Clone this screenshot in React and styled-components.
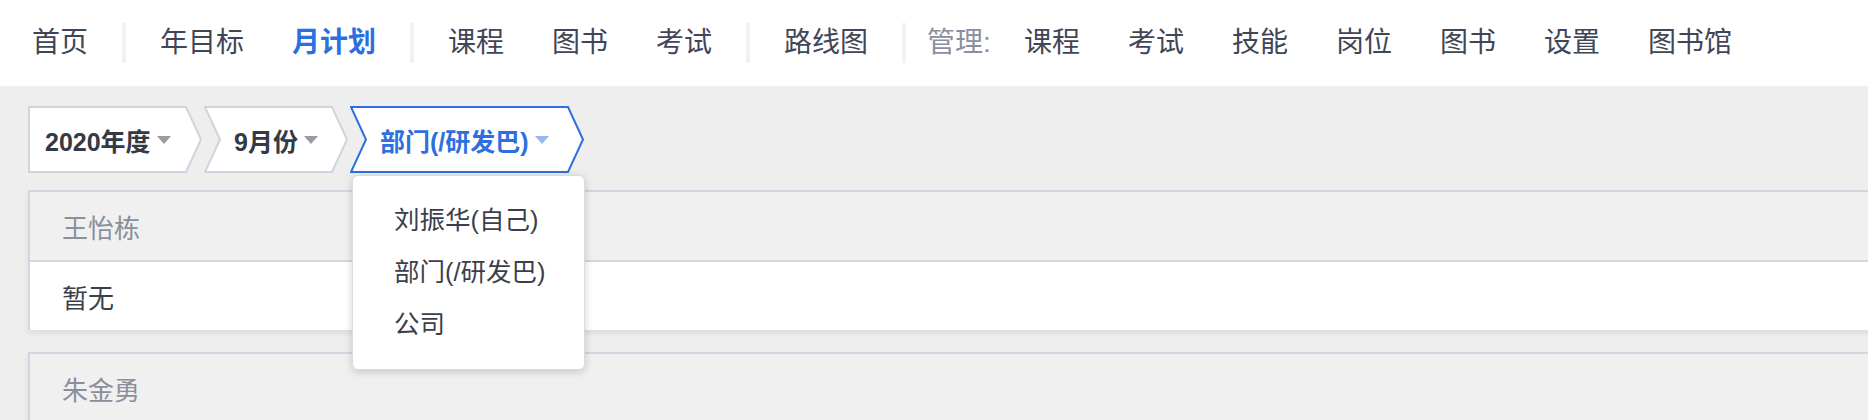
import React from 'react';
import styled, { createGlobalStyle } from 'styled-components';

const GlobalStyle = createGlobalStyle`
  html, body {
    margin: 0;
    padding: 0;
    background: #eeeeee;
    overflow-x: hidden;
    font-family: "Liberation Sans", "Noto Sans CJK SC", sans-serif;
  }
`;

const NavBar = styled.nav`
  height: 86px;
  background: #ffffff;
  display: flex;
  align-items: center;
  padding-left: 8px;
`;

const NavItem = styled.a`
  padding: 0 24px;
  font-size: 28px;
  line-height: 40px;
  color: ${(p) => (p.$active ? '#2d6fe0' : '#3f4657')};
  font-weight: ${(p) => (p.$active ? 700 : 400)};
  white-space: nowrap;
  cursor: pointer;
`;

const NavLabel = styled.span`
  padding: 0 9px 0 11px;
  font-size: 28px;
  line-height: 40px;
  color: #8a8fa0;
  white-space: nowrap;
`;

const NavDivider = styled.span`
  width: 4px;
  height: 40px;
  margin: 0 10px;
  background: #f2f2f2;
`;

const Content = styled.main`
  padding: 20px 0 0 28px;
`;

const Crumbs = styled.div`
  display: flex;
  gap: 2px;
  margin-bottom: 17px;
`;

const Crumb = styled.div`
  position: relative;
  box-sizing: border-box;
  width: ${(p) => p.$width}px;
  height: 67px;
  display: flex;
  align-items: center;
  padding-left: ${(p) => (p.$first ? 17 : 30)}px;
  font-size: 25px;
  font-weight: 700;
  color: ${(p) => (p.$active ? '#2d6fe0' : '#343946')};
  white-space: nowrap;
  cursor: pointer;

  svg.shape {
    position: absolute;
    left: 0;
    top: 0;
    z-index: 0;
  }
`;

const CrumbText = styled.span`
  position: relative;
  z-index: 1;
`;

const Caret = styled.span`
  position: relative;
  z-index: 1;
  margin-left: 6px;
  width: 0;
  height: 0;
  border-left: 7.5px solid transparent;
  border-right: 7.5px solid transparent;
  border-top: 8px solid ${(p) => (p.$active ? '#9ab8f0' : '#9a9ca3')};
`;

const Menu = styled.ul`
  position: absolute;
  left: 2px;
  top: 69px;
  z-index: 5;
  width: 233px;
  box-sizing: border-box;
  margin: 0;
  padding: 18px 0 19px;
  list-style: none;
  background: #ffffff;
  border: 1px solid #dcdcdc;
  border-radius: 6px;
  box-shadow: 0 2px 8px rgba(0, 0, 0, 0.18);
  font-weight: 400;
`;

const MenuItem = styled.li`
  height: 52px;
  line-height: 52px;
  padding-left: 41px;
  font-size: 25.5px;
  color: #3a3f4b;
`;

const Panel = styled.section`
  margin: 0 -60px 22px 0;
  border-top: 2px solid #d3d6e0;
  border-left: 2px solid #d3d6e0;
  box-shadow: 0 3px 6px rgba(0, 0, 0, 0.08);
`;

const PanelHead = styled.div`
  height: 68px;
  display: flex;
  align-items: center;
  padding-left: 32px;
  background: #f0f0f0;
  border-bottom: 2px solid #d3d6e0;
  font-size: 26px;
  color: #8a8f9c;
`;

const PanelBody = styled.div`
  height: 68px;
  display: flex;
  align-items: center;
  padding-left: 32px;
  background: #ffffff;
  font-size: 26px;
  color: #3a3f4b;
`;

const CrumbShape = ({ width, first, active }) => {
  const h = 67;
  const pts = [
    `1,1`,
    `${width - 16},1`,
    `${width - 1},${h / 2}`,
    `${width - 16},${h - 1}`,
    `1,${h - 1}`,
  ];
  if (!first) pts.push(`16,${h / 2}`);
  return (
    <svg className="shape" width={width} height={h} viewBox={`0 0 ${width} ${h}`}>
      <polygon
        points={pts.join(' ')}
        fill="#ffffff"
        stroke={active ? '#2d6fe0' : '#d0d4df'}
        strokeWidth="2"
        strokeLinejoin="miter"
      />
    </svg>
  );
};

const crumbs = [
  { label: '2020年度', width: 174, first: true },
  { label: '9月份', width: 144 },
  { label: '部门(/研发巴)', width: 234, active: true, open: true },
];

const people = [
  { name: '王怡栋', plan: '暂无' },
  { name: '朱金勇', plan: '暂无' },
];

const App = () => {
  return (
    <>
      <GlobalStyle />
      <NavBar>
        <NavItem>首页</NavItem>
        <NavDivider />
        <NavItem>年目标</NavItem>
        <NavItem $active>月计划</NavItem>
        <NavDivider />
        <NavItem>课程</NavItem>
        <NavItem>图书</NavItem>
        <NavItem>考试</NavItem>
        <NavDivider />
        <NavItem>路线图</NavItem>
        <NavDivider />
        <NavLabel>管理:</NavLabel>
        <NavItem>课程</NavItem>
        <NavItem>考试</NavItem>
        <NavItem>技能</NavItem>
        <NavItem>岗位</NavItem>
        <NavItem>图书</NavItem>
        <NavItem>设置</NavItem>
        <NavItem>图书馆</NavItem>
      </NavBar>

      <Content>
        <Crumbs>
          {crumbs.map((c) => (
            <Crumb key={c.label} $width={c.width} $first={c.first} $active={c.active}>
              <CrumbShape width={c.width} first={c.first} active={c.active} />
              <CrumbText>{c.label}</CrumbText>
              <Caret $active={c.active} />
              {c.open && (
                <Menu>
                  <MenuItem>刘振华(自己)</MenuItem>
                  <MenuItem>部门(/研发巴)</MenuItem>
                  <MenuItem>公司</MenuItem>
                </Menu>
              )}
            </Crumb>
          ))}
        </Crumbs>

        {people.map((p) => (
          <Panel key={p.name}>
            <PanelHead>{p.name}</PanelHead>
            <PanelBody>{p.plan}</PanelBody>
          </Panel>
        ))}
      </Content>
    </>
  );
};

export default App;
